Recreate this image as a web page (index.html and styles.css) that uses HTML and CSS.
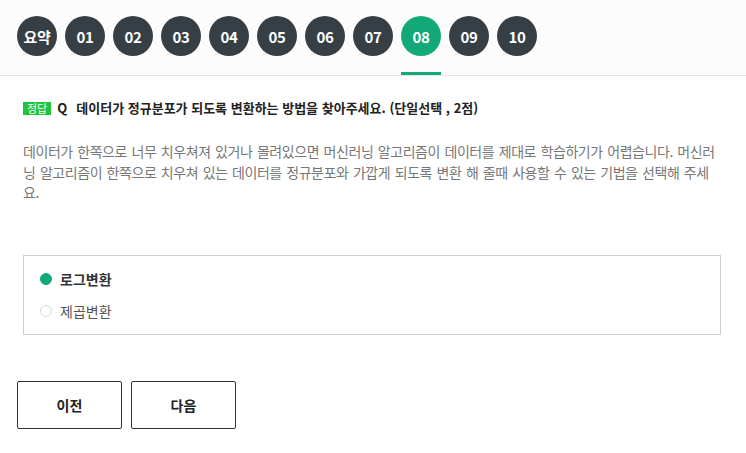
FILE: index.html
```html
<!DOCTYPE html>
<html lang="ko">
<head>
<meta charset="utf-8">
<link rel="stylesheet" href="styles.css">
</head>
<body>
<header class="nav">
  <div class="nav-item"><span class="num">요약</span><span class="bar"></span></div>
  <div class="nav-item"><span class="num">01</span><span class="bar"></span></div>
  <div class="nav-item"><span class="num">02</span><span class="bar"></span></div>
  <div class="nav-item"><span class="num">03</span><span class="bar"></span></div>
  <div class="nav-item"><span class="num">04</span><span class="bar"></span></div>
  <div class="nav-item"><span class="num">05</span><span class="bar"></span></div>
  <div class="nav-item"><span class="num">06</span><span class="bar"></span></div>
  <div class="nav-item"><span class="num">07</span><span class="bar"></span></div>
  <div class="nav-item active"><span class="num">08</span><span class="bar"></span></div>
  <div class="nav-item"><span class="num">09</span><span class="bar"></span></div>
  <div class="nav-item"><span class="num">10</span><span class="bar"></span></div>
</header>
<main class="content">
  <h1 class="question"><span class="badge">정답</span><span class="q">Q</span>데이터가 정규분포가 되도록 변환하는 방법을 찾아주세요. (단일선택 , 2점)</h1>
  <p class="desc">데이터가 한쪽으로 너무 치우쳐져 있거나 몰려있으면 머신러닝 알고리즘이 데이터를 제대로 학습하기가 어렵습니다. 머신러닝 알고리즘이 한쪽으로 치우쳐 있는 데이터를 정규분포와 가깝게 되도록 변환 해 줄때 사용할 수 있는 기법을 선택해 주세요.</p>
  <div class="options">
    <div class="option selected"><span class="radio"></span>로그변환</div>
    <div class="option"><span class="radio"></span>제곱변환</div>
  </div>
</main>
<div class="actions">
  <button class="btn">이전</button>
  <button class="btn">다음</button>
</div>
</body>
</html>
```

FILE: styles.css
```css
* { box-sizing: border-box; }
body {
  margin: 0;
  background: #fff;
  font-family: "Noto Sans CJK KR", "Noto Sans", sans-serif;
  color: #222;
}
.nav {
  display: flex;
  gap: 8px;
  padding: 16px 17px 0;
  background: #fcfcfc;
  border-bottom: 1px solid #e4e4e4;
}
.nav-item {
  display: flex;
  flex-direction: column;
  align-items: center;
  width: 40px;
}
.num {
  width: 40px;
  height: 40px;
  border-radius: 50%;
  background: #363e46;
  color: #fff;
  font-size: 15px;
  font-weight: 700;
  display: flex;
  align-items: center;
  justify-content: center;
  letter-spacing: -0.3px;
}
.bar {
  width: 40px;
  height: 3px;
  margin-top: 16px;
}
.nav-item.active .num { background: #12a877; }
.nav-item.active .bar { background: #12a877; }

.content {
  padding: 0 25px 0 23px;
}
.question {
  margin: 24px 0 0;
  font-size: 13px;
  font-weight: 700;
  line-height: 16px;
  color: #222;
  display: flex;
  align-items: center;
}
.badge {
  background: #1ec43c;
  color: #fff;
  font-size: 11px;
  font-weight: 400;
  line-height: 13px;
  padding: 0 4px;
  margin-right: 6px;
}
.q { margin-right: 9px; }
.desc {
  margin: 25px 0 0;
  font-size: 14px;
  line-height: 20.5px;
  letter-spacing: -0.44px;
  word-spacing: 1px;
  color: #777;
  word-break: break-all;
}
.options {
  margin-top: 52px;
  border: 1px solid #cfcfcf;
  padding: 7px 16px;
}
.option {
  display: flex;
  align-items: center;
  gap: 8px;
  height: 32px;
  font-size: 14px;
  color: #555;
}
.option.selected { font-weight: 700; color: #333; }
.radio {
  width: 12px;
  height: 12px;
  border-radius: 50%;
  border: 1px solid #d8d8d8;
  background: #fff;
}
.option.selected .radio {
  border-color: #12a877;
  background: #12a877;
}
.actions {
  display: flex;
  gap: 9px;
  padding: 46px 17px 0;
}
.btn {
  width: 105px;
  height: 48px;
  border: 1px solid #333;
  border-radius: 2px;
  background: #fff;
  font-family: inherit;
  font-size: 14px;
  font-weight: 700;
  color: #222;
}
```
